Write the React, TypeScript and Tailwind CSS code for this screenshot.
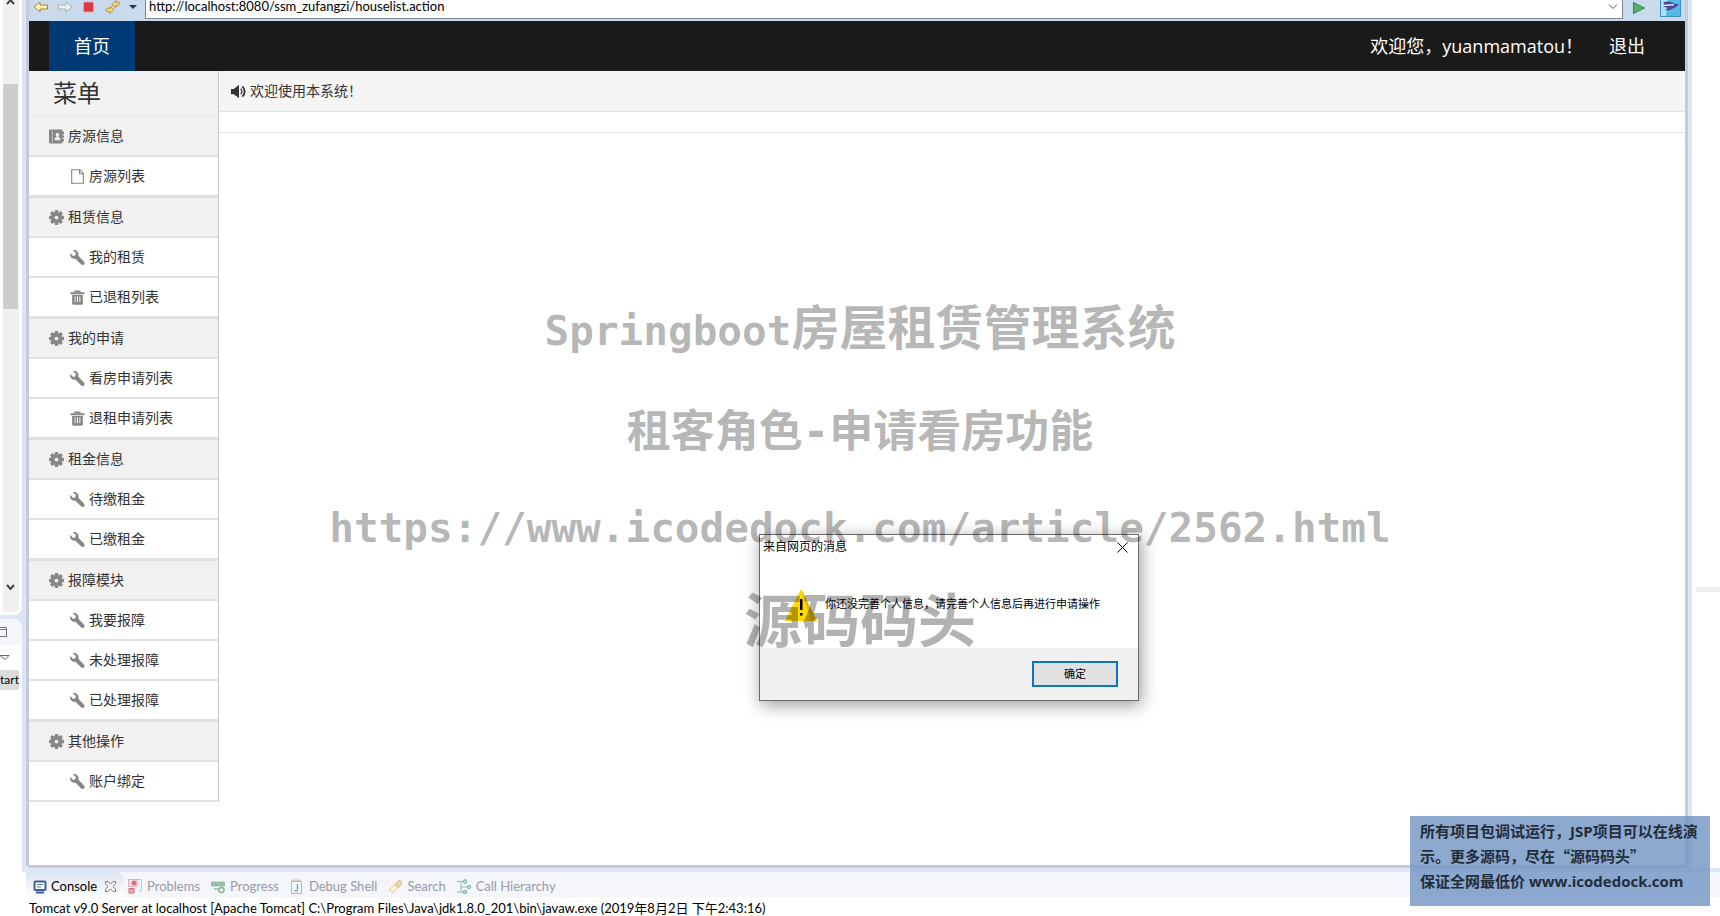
import React from "react";

type IconProps = { className?: string };

const GearIcon = ({ className }: IconProps) => (
  <svg viewBox="0 0 16 16" className={className} fill="currentColor" aria-hidden="true">
    {[0, 45, 90, 135].map((deg) => (
      <rect key={deg} x="6.200" y="0" width="3.600" height="16" rx="0.500" transform={`rotate(${deg} 8 8)`} />
    ))}
    <circle cx="8" cy="8" r="6.200" />
    <circle cx="8" cy="8" r="2" fill="#f1f1f1" />
  </svg>
);

const WrenchIcon = ({ className }: IconProps) => (
  <svg viewBox="0.500 0.500 15 15" className={className} fill="currentColor" aria-hidden="true">
    <path d="M3.400.8 6.400 3.600 5.800 5.700 3.600 6.400.800 3.500C.3 5.300.700 7.100 2 8.300c1.100 1 2.600 1.300 4 .9l5.500 5.600c.9.9 2.200.9 3 .1.8-.8.800-2.100-.1-3L8.900 6.300c.5-1.600.2-3.200-1-4.400C6.700.700 5 .3 3.400.8z" />
  </svg>
);

const TrashIcon = ({ className }: IconProps) => (
  <svg viewBox="0 0 16 16" className={className} aria-hidden="true">
    <path d="M5.500 3V1.200h5V3" fill="none" stroke="currentColor" strokeWidth="1.600" />
    <rect x="0.500" y="2.400" width="15" height="2" rx="0.500" fill="currentColor" />
    <path fill="currentColor" d="M2.300 5.200h11.400V14a1.700 1.700 0 0 1-1.700 1.700H4A1.700 1.700 0 0 1 2.300 14z" />
    <path d="M5.500 6.800v6.200M8 6.800v6.200M10.500 6.800v6.200" stroke="#fff" strokeWidth="1" />
  </svg>
);

const FileIcon = ({ className }: IconProps) => (
  <svg viewBox="0 0 16 16" className={className} fill="none" stroke="currentColor" aria-hidden="true">
    <path d="M1.800.8h8.700l3.700 3.900v10.500H1.800z" strokeWidth="1.200" />
    <path d="M10.200.8v4.200h4" strokeWidth="1.200" />
  </svg>
);

const BookIcon = ({ className }: IconProps) => (
  <svg viewBox="0 0 16 16" className={className} aria-hidden="true">
    <path fill="currentColor" d="M1.500.5H13A1.500 1.500 0 0 1 14.500 2v1H16v2.500h-1.500v1.300H16v2.500h-1.500v1.300H16V13h-1.500v1a1.500 1.500 0 0 1-1.500 1.500H1.500A1.500 1.500 0 0 1 0 14V2A1.500 1.500 0 0 1 1.500.500z" />
    <path stroke="#f1f1f1" strokeWidth="0.600" d="M3.500 1.500v13" />
    <path fill="#f1f1f1" d="M9 4a2 2 0 0 1 1 3.700v.8l2 1.200V12H6V9.700l2-1.200v-.8A2 2 0 0 1 9 4z" />
  </svg>
);

const SpeakerIcon = ({ className }: IconProps) => (
  <svg viewBox="0 0 16 16" className={className} fill="none" stroke="currentColor" aria-hidden="true">
    <path fill="currentColor" stroke="none" d="M0 5.200h3L8.500.8v14.400L3 10.800H0z" />
    <path d="M10.300 5a4 4 0 0 1 0 6" strokeWidth="1.300" />
    <path d="M12 2.500a7.200 7.200 0 0 1 0 11" strokeWidth="2" />
  </svg>
);

const menu = [
  { title: "房源信息", icon: BookIcon, items: [{ name: "房源列表", icon: FileIcon }] },
  {
    title: "租赁信息",
    icon: GearIcon,
    items: [
      { name: "我的租赁", icon: WrenchIcon },
      { name: "已退租列表", icon: TrashIcon },
    ],
  },
  {
    title: "我的申请",
    icon: GearIcon,
    items: [
      { name: "看房申请列表", icon: WrenchIcon },
      { name: "退租申请列表", icon: TrashIcon },
    ],
  },
  {
    title: "租金信息",
    icon: GearIcon,
    items: [
      { name: "待缴租金", icon: WrenchIcon },
      { name: "已缴租金", icon: WrenchIcon },
    ],
  },
  {
    title: "报障模块",
    icon: GearIcon,
    items: [
      { name: "我要报障", icon: WrenchIcon },
      { name: "未处理报障", icon: WrenchIcon },
      { name: "已处理报障", icon: WrenchIcon },
    ],
  },
  { title: "其他操作", icon: GearIcon, items: [{ name: "账户绑定", icon: WrenchIcon }] },
];

const BrowserBar = () => (
  <div className="flex h-[21px] items-start bg-[#c9daec]">
    <div className="flex w-[116px] shrink-0 items-center gap-2 pl-1">
      <button aria-label="Back">
        <svg viewBox="0 0 16 12" className="block h-3 w-4">
          <path d="M1 6 7 1v3h7.500v4H7v3z" fill="#fff3b8" stroke="#ab8130" />
        </svg>
      </button>
      <button aria-label="Forward">
        <svg viewBox="0 0 16 12" className="block h-3 w-4">
          <path d="M15 6 9 1v3H1.500v4H9v3z" fill="#edf1f6" stroke="#a9b0ba" />
        </svg>
      </button>
      <button aria-label="Stop">
        <svg viewBox="0 0 16 12" className="block h-3 w-4">
          <rect x="2.500" y="1" width="10" height="10" rx="1" fill="#dc3545" stroke="#eda2a4" />
        </svg>
      </button>
      <button aria-label="Refresh">
        <svg viewBox="0 0 16 14" className="block h-[14px] w-4" stroke="#ab8130" strokeWidth="0.800" fill="#f6d773">
          <path d="M7 4.500 11 .5v2c2-.5 3.500-1 4 .5-.5 2-2 2.500-4 2.500v2z" />
          <path d="M9 9.500 5 13.500v-2c-2 .5-4 .5-4-1.500.5-2 2-2 4-1.500v-2z" />
        </svg>
      </button>
      <button aria-label="History">
        <svg viewBox="0 0 8 6" className="block h-[6px] w-2">
          <path d="M0 1h8L4 5z" fill="#26384a" />
        </svg>
      </button>
    </div>
    <div className="flex h-[19px] min-w-0 flex-1 items-start border-x border-b border-[#7c8794] bg-white">
      <input
        aria-label="Address"
        className="-mt-1 h-5 min-w-0 flex-1 pl-[3px] font-['Lato',sans-serif] text-[13px] leading-5 text-black outline-none"
        defaultValue="http://localhost:8080/ssm_zufangzi/houselist.action"
      />
      <button aria-label="Show addresses" className="px-1 pt-1">
        <svg viewBox="0 0 10 6" className="block h-[6px] w-[10px]" fill="none" stroke="#555">
          <path d="m1 .5 4 4 4-4" />
        </svg>
      </button>
    </div>
    <div className="flex w-[62px] shrink-0 justify-between pl-2 pr-1">
      <button aria-label="Go">
        <svg viewBox="0 0 16 14" className="block h-[14px] w-4">
          <path d="M2.500 .5 13.500 6l-11 5.500z" fill="#54b267" stroke="#2f8a4a" />
        </svg>
      </button>
      <button aria-label="Open external browser">
        <svg viewBox="0 0 21 17" className="block h-[17px] w-[21px]">
          <path d="M.5-1h20v17.500H.5z" fill="#55b9e6" stroke="#3d8fc4" />
          <path d="M1 0h7L6 16H1z" fill="#a8e0f6" />
          <path d="M4 2c4-1.500 8 0 11 2l4 0-3 3-7 3.500-4-.5 3-2-5-1.500z" fill="#4a4596" />
          <path d="M2 5.500 14 4.800" stroke="#e9e4ff" strokeWidth="1.600" />
        </svg>
      </button>
    </div>
  </div>
);

const Sidebar = () => (
  <nav className="w-[190px] shrink-0 self-start border-r border-[#c6cacf]">
    <h1 className="h-[46px] border-b border-[#e6e6e6] bg-[#f1f1f1] pl-6 text-2xl leading-[44px] text-[#333]">菜单</h1>
    {menu.map((group, index) => (
      <div key={group.title} className={index < menu.length - 1 ? "border-b border-[#dedede]" : ""}>
        <h2 className="flex h-10 items-center gap-1 border-b-2 border-[#e1e1e1] bg-[#f1f1f1] pl-5 text-sm leading-[22px] text-[#333]">
          <group.icon className="h-[15px] w-[15px] text-[#868686]" />
          {group.title}
        </h2>
        <ul>
          {group.items.map((item) => (
            <li key={item.name} className="border-b-2 border-[#e1e1e1] bg-white">
              <a href="#" className="flex h-[38px] items-center gap-1 pl-[41px] text-sm leading-[22px] text-[#333]">
                <item.icon className="h-[15px] w-[15px] text-[#868686]" />
                {item.name}
              </a>
            </li>
          ))}
        </ul>
      </div>
    ))}
  </nav>
);

// narrow strip of the workbench views on the left
const LeftViews = () => (
  <aside className="flex w-[22px] shrink-0 flex-col bg-[#dde4f3]">
    <div className="flex h-[615px] flex-col rounded-br-lg bg-white">
      <div className="ml-[3px] flex h-[612px] w-4 flex-col rounded-br bg-[#f0f0f0]">
        <svg viewBox="0 0 16 8" className="block h-2 w-4" fill="none" stroke="#444" strokeWidth="2">
          <path d="m4 4 3.500-4L11 4" />
        </svg>
        <div className="mt-[76px] h-[225px] w-[15px] bg-[#cdcdcd]" />
        <svg viewBox="0 0 16 8" className="mb-5 mt-auto block h-2 w-4" fill="none" stroke="#444" strokeWidth="2">
          <path d="m4 1 3.500 4L11 1" />
        </svg>
      </div>
    </div>
    <div className="mt-1 flex flex-1 flex-col rounded-tr-lg bg-white">
      <div className="flex h-[26px] items-center rounded-tr-lg bg-[#f4f6fc]">
        <svg viewBox="0 0 7 10" className="block h-[10px] w-[7px]" fill="none" stroke="#777">
          <path d="M0 .5h6.500v9H0M0 2.500h6.500" />
        </svg>
      </div>
      <div className="flex h-[25px] items-center">
        <svg viewBox="0 0 10 6" className="block h-[6px] w-[10px]" fill="none" stroke="#666">
          <path d="M0 .5h9L5 4.500z" />
        </svg>
      </div>
      <div className="flex h-5 w-[19px] justify-end bg-[#dcdcdc] font-['Lato',sans-serif] text-xs leading-5 text-black">
        tart
      </div>
    </div>
  </aside>
);

const tabs = [
  {
    name: "Problems",
    icon: (
      <>
        <path d="M6 .5h7.500v12H11" fill="#e8f0f8" stroke="#b9cede" />
        <path d="M.5.5H9v7H.5z" fill="#f6dfe2" stroke="#d9b3b9" />
        <circle cx="6" cy="4" r="2.500" fill="#d8727c" />
        <path d="M.5 9h6v5.500h-6z" fill="#d8727c" />
        <path d="m2 10.500 3 3m0-3-3 3" stroke="#fff" />
      </>
    ),
  },
  {
    name: "Progress",
    icon: (
      <>
        <path d="M.5 3h13v4H.5z" fill="#8fc4a3" stroke="#a4b7a8" />
        <path d="M3 10h6" stroke="#8fc4a3" strokeWidth="1.500" />
        <circle cx="10.500" cy="11" r="2.500" fill="#fff" stroke="#7fb896" strokeWidth="1.500" />
      </>
    ),
  },
  {
    name: "Debug Shell",
    icon: (
      <>
        <path d="M1.500 2.500h10v12h-10z" fill="#f3f8fa" stroke="#a9bac2" />
        <path d="M1.500 1.500h10" stroke="#a9b3a0" strokeDasharray="1 1" strokeWidth="2" />
        <path d="M7.500 5v5.500c0 1.500-2 2-3 1" fill="none" stroke="#7fa9bf" strokeWidth="1.500" />
      </>
    ),
  },
  {
    name: "Search",
    icon: (
      <>
        <path d="m1 11 6-6 3 3-5 6z" fill="#fbf3d8" stroke="#e2cc98" />
        <path d="M7 5 11 1.500l2.500 1L13 6l-3 2.500z" fill="#ecd8a4" stroke="#d5bd87" />
      </>
    ),
  },
  {
    name: "Call Hierarchy",
    icon: (
      <>
        <path d="M0 2.500h6M4 8h7M4 2.500v11M0 13h6" fill="none" stroke="#8fbcaa" />
        <circle cx="8" cy="2.500" r="1.800" fill="#b2dcca" stroke="#7fb39d" />
        <circle cx="12" cy="8" r="1.800" fill="#b2dcca" stroke="#7fb39d" />
        <circle cx="8" cy="13" r="1.800" fill="#b2dcca" stroke="#7fb39d" />
      </>
    ),
  },
];

const ConsoleView = () => (
  <section className="border-t-4 border-[#dfe5f2] pl-1 font-['Lato','Noto_Sans_CJK_SC',sans-serif] text-[13px]">
    <div className="flex h-[25px] bg-[#f4f6fc]">
      <div className="flex items-center rounded-tr-lg bg-linear-to-b from-[#dde5f1] to-white pl-[7px] pr-2 pt-1">
        <svg viewBox="0 0 14 14" className="mr-1 block size-[14px]" fill="none" stroke="#3c5f96" strokeWidth="2">
          <rect x="1.500" y="1.500" width="11" height="8.500" rx="1" fill="#fff" />
          <path d="M4 4.500h6M4 7h4" stroke="#5577a8" strokeWidth="1" />
          <path d="M3 12.500h8" />
        </svg>
        <button className="w-[54px] text-left text-black">Console</button>
        <button aria-label="Close Console">
          <svg viewBox="0 0 11 11" className="block size-[11px]" fill="#fff" stroke="#777">
            <path d="M.5.5H3l2.500 2.700L8 .5h2.500V3L7.800 5.500l2.700 2.500v2.500H8L5.500 7.800 3 10.500H.5V8l2.700-2.500L.5 3z" />
          </svg>
        </button>
      </div>
      <div className="flex items-center gap-[11px] pl-1 pt-1">
        {tabs.map((tab) => (
          <button key={tab.name} className="flex items-center gap-1 text-[#969ba5]">
            <svg viewBox="0 0 15 15" className="block size-[15px]">
              {tab.icon}
            </svg>
            {tab.name}
          </button>
        ))}
      </div>
    </div>
    <p className="h-[19px] truncate bg-white pl-[3px] leading-[23px] text-black">
      Tomcat v9.0 Server at localhost [Apache Tomcat] C:\Program Files\Java\jdk1.8.0_201\bin\javaw.exe (2019年8月2日 下午2:43:16)
    </p>
  </section>
);

const MessageDialog = () => (
  <div
    role="alertdialog"
    aria-labelledby="dialog-title"
    className="absolute left-[759px] top-[534px] w-[380px] border border-[#6b6b6b] bg-white text-black shadow-[2px_4px_16px_rgba(0,0,0,0.4)]"
  >
    <div className="flex h-6 items-center justify-between pl-[3px] pr-[10px]">
      <h3 id="dialog-title" className="text-xs">
        来自网页的消息
      </h3>
      <button aria-label="Close">
        <svg viewBox="0 0 11 11" className="block size-[11px]" stroke="#000">
          <path d="m.5.5 10 10m0-10-10 10" />
        </svg>
      </button>
    </div>
    <div className="flex h-[89px] items-center gap-2 pl-[25px] pt-0.5">
      <svg viewBox="0 0 32 32" className="block size-8">
        <path d="M16 0 32 32H0z" fill="#ffd900" />
        <path d="M16 0 32 32h-6z" fill="#e5b800" />
        <path d="M15 10h2.500v11H15zM15 24h2.500v2.500H15z" fill="#000" />
      </svg>
      <p className="text-[11px]">你还没完善个人信息，请完善个人信息后再进行申请操作</p>
    </div>
    <div className="flex h-[52px] items-center justify-end bg-[#f0f0f0] pr-5">
      <button className="h-[26px] w-[86px] border-2 border-[#0a74c8] bg-[#e1e1e1] text-[11px] leading-4">确定</button>
    </div>
  </div>
);

const Watermark = () => (
  <div className="pointer-events-none absolute inset-0 flex flex-col items-center justify-center pt-9 font-['DejaVu_Sans_Mono','Noto_Sans_CJK_SC',monospace] text-[41px] font-bold text-black/30">
    <p className="h-[100px] leading-[100px]">
      Springboot<span className="text-5xl leading-[100px]">房屋租赁管理系统</span>
    </p>
    <p className="h-[108px] text-[44px] leading-[108px]">租客角色-申请看房功能</p>
    <p className="h-[84px] leading-[84px]">https://www.icodedock.com/article/2562.html</p>
    <p className="h-[104px] text-[58px] leading-[104px]">源码码头</p>
  </div>
);

export default function App() {
  return (
    <div className="relative flex min-h-screen overflow-hidden bg-white font-['Open_Sans','Noto_Sans_CJK_SC',sans-serif]">
      <LeftViews />
      <div className="flex min-w-0 flex-1 flex-col">
        <div className="flex flex-1">
          <div className="flex min-w-0 flex-1 flex-col border-l-4 border-[#dde4f3]">
            <main className="flex flex-1 flex-col rounded-bl border-x-[3px] border-b-[3px] border-[#c2ccdc] bg-white">
              <BrowserBar />
              <header className="flex h-[50px] items-center justify-between bg-[#1a1a1a] pl-5 text-lg text-white">
                <a href="#" className="flex h-full w-[86px] items-center justify-center bg-[#003a75]">
                  首页
                </a>
                <div className="flex gap-[26px] pr-10">
                  <span>欢迎您，yuanmamatou！</span>
                  <a href="#">退出</a>
                </div>
              </header>
              <div className="flex flex-1">
                <Sidebar />
                <div className="min-w-0 flex-1">
                  <div className="flex h-[41px] items-center gap-1 border-b border-[#e0e4e6] bg-[#f5f5f5] pl-3 text-sm text-[#333]">
                    <SpeakerIcon className="h-[15px] w-[15px]" />
                    欢迎使用本系统！
                  </div>
                  <div className="h-[21px] border-b border-[#e0e4e6]" />
                </div>
              </div>
            </main>
          </div>
          <div className="flex w-8 shrink-0 flex-col border-l-4 border-[#dfe6f3] pt-[587px]">
            <div className="ml-1 h-[5px] bg-[#efefef]" />
          </div>
        </div>
        <ConsoleView />
      </div>
      <MessageDialog />
      <Watermark />
      <div className="absolute bottom-[10px] right-[10px] h-[90px] w-[300px] bg-[#7093c2]/80 px-[10px] pt-[3px] text-[15px] font-bold leading-[25px] text-[#222d3c]">
        所有项目包调试运行，JSP项目可以在线演示。更多源码，尽在
        <span className="font-['Noto_Sans_CJK_SC',sans-serif] leading-none">“源码码头”</span>
        <br />
        保证全网最低价 <a href="http://www.icodedock.com">www.icodedock.com</a>
      </div>
    </div>
  );
}
